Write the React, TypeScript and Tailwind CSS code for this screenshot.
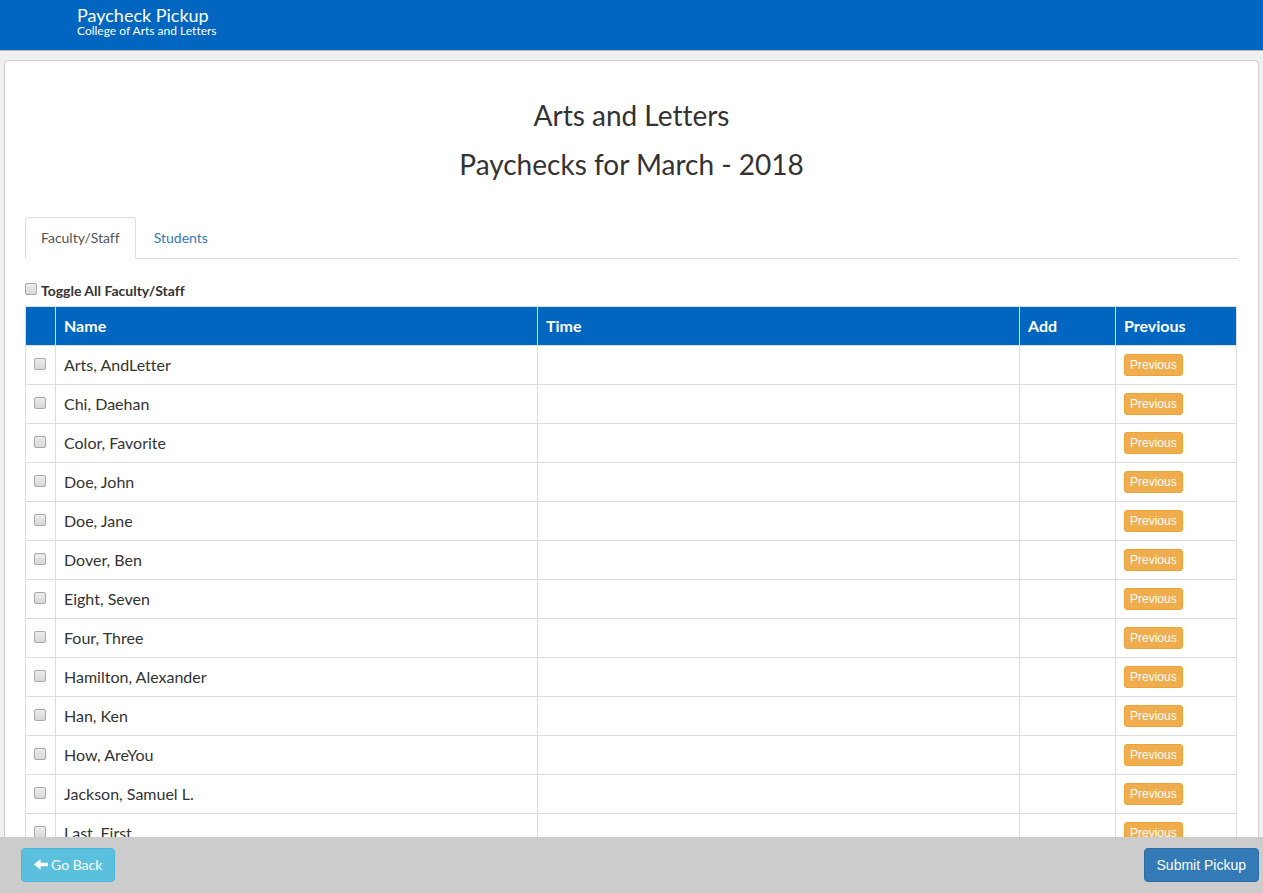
import { useState } from "react";

const people = [
  "Arts, AndLetter",
  "Chi, Daehan",
  "Color, Favorite",
  "Doe, John",
  "Doe, Jane",
  "Dover, Ben",
  "Eight, Seven",
  "Four, Three",
  "Hamilton, Alexander",
  "Han, Ken",
  "How, AreYou",
  "Jackson, Samuel L.",
  "Last, First",
];

const checkboxClass =
  "block size-3 shrink-0 appearance-none rounded-[2px] border border-[#a9a9a9] bg-linear-to-b from-[#ececec] to-[#d8d8d8] checked:border-[#00529b] checked:from-[#0066bf] checked:to-[#0066bf]";

function Header() {
  return (
    <header className="h-[51px] shrink-0 border-b border-[#b8b8b8] bg-[#0066bf] pl-[77px] pt-[5px] text-white">
      <div className="text-[18px] leading-5">Paycheck Pickup</div>
      <div className="text-[12px] leading-3">College of Arts and Letters</div>
    </header>
  );
}

function Tabs() {
  return (
    <nav className="flex gap-[2px] border-b border-[#dddddd] text-[14px] leading-5">
      <a
        href="#faculty"
        className="-mb-px rounded-t border border-[#dddddd] border-b-white bg-white px-[15px] py-[10px] text-[#555555]"
      >
        Faculty/Staff
      </a>
      <a href="#students" className="-mb-px border border-transparent px-[15px] py-[10px] text-[#337ab7]">
        Students
      </a>
    </nav>
  );
}

export default function App() {
  const [selected, setSelected] = useState<string[]>([]);
  const allSelected = selected.length === people.length;

  const toggle = (name: string) =>
    setSelected((now) => (now.includes(name) ? now.filter((n) => n !== name) : [...now, name]));

  return (
    <div className="flex h-screen flex-col bg-[#f0f0f0] font-['Lato',sans-serif] text-[#333333] [font-variant-ligatures:none]">
      <Header />
      <main className="min-h-0 flex-1 overflow-y-auto px-1 pt-[9px] [scrollbar-width:none]">
        <section className="rounded border border-[#cccccc] bg-white px-5 pb-5 pt-[38px]">
          <h1 className="text-center text-[28px] leading-[33px]">Arts and Letters</h1>
          <h2 className="mb-[36px] mt-4 text-center text-[28px] leading-[33px]">Paychecks for March - 2018</h2>
          <Tabs />
          <div className="mt-[22px] flex gap-1 text-[14px] font-bold leading-5">
            <input
              id="toggle-all"
              type="checkbox"
              className={checkboxClass + " mt-[2px]"}
              checked={allSelected}
              onChange={() => setSelected(allSelected ? [] : people)}
            />
            <label htmlFor="toggle-all">Toggle All Faculty/Staff</label>
          </div>
          <div className="mt-[5px] pr-px">
            <table className="w-full table-fixed border-collapse border border-[#dddddd] text-[16px] leading-[22px]">
              <colgroup>
                <col className="w-[30px]" />
                <col />
                <col />
                <col className="w-[96px]" />
                <col className="w-[121px]" />
              </colgroup>
              <thead>
                <tr className="h-[39px] bg-[#0066bf] text-left text-white">
                  <td className="border border-[#dddddd]" />
                  <th className="border border-[#dddddd] px-2">Name</th>
                  <th className="border border-[#dddddd] px-2">Time</th>
                  <th className="border border-[#dddddd] px-2">Add</th>
                  <th className="border border-[#dddddd] px-2">Previous</th>
                </tr>
              </thead>
              <tbody>
                {people.map((name) => (
                  <tr key={name} className="h-[39px]">
                    <td className="border border-[#dddddd] px-2 pb-[2px]">
                      <input
                        type="checkbox"
                        aria-label={name}
                        className={checkboxClass}
                        checked={selected.includes(name)}
                        onChange={() => toggle(name)}
                      />
                    </td>
                    <td className="border border-[#dddddd] px-2">{name}</td>
                    <td className="border border-[#dddddd] px-2" />
                    <td className="border border-[#dddddd] px-2" />
                    <td className="border border-[#dddddd] px-2">
                      <button
                        type="button"
                        className="block h-[22px] rounded-[3px] border border-[#eea236] bg-[#f0ad4e] px-[5px] font-['Liberation_Sans',sans-serif] text-[12px] leading-[18px] text-white"
                      >
                        Previous
                      </button>
                    </td>
                  </tr>
                ))}
              </tbody>
            </table>
          </div>
        </section>
      </main>
      <footer className="flex h-14 shrink-0 items-center justify-between bg-[#cccccc] pl-[21px] pr-1 text-[14px] leading-5 text-white">
        <button
          type="button"
          className="flex items-center gap-[3px] rounded border border-[#46b8da] bg-[#5bc0de] px-3 py-[6px]"
        >
          <svg viewBox="0 0 14 12" className="h-3 w-[14px]" fill="currentColor" aria-hidden="true">
            <path d="M0 5.5 L6.5 0 V3.8 H14 V7.2 H6.5 V11 Z" />
          </svg>
          Go Back
        </button>
        <button
          type="button"
          className="rounded border border-[#2e6da4] bg-[#337ab7] px-3 py-[6px] font-['Liberation_Sans',sans-serif]"
        >
          Submit Pickup
        </button>
      </footer>
    </div>
  );
}
